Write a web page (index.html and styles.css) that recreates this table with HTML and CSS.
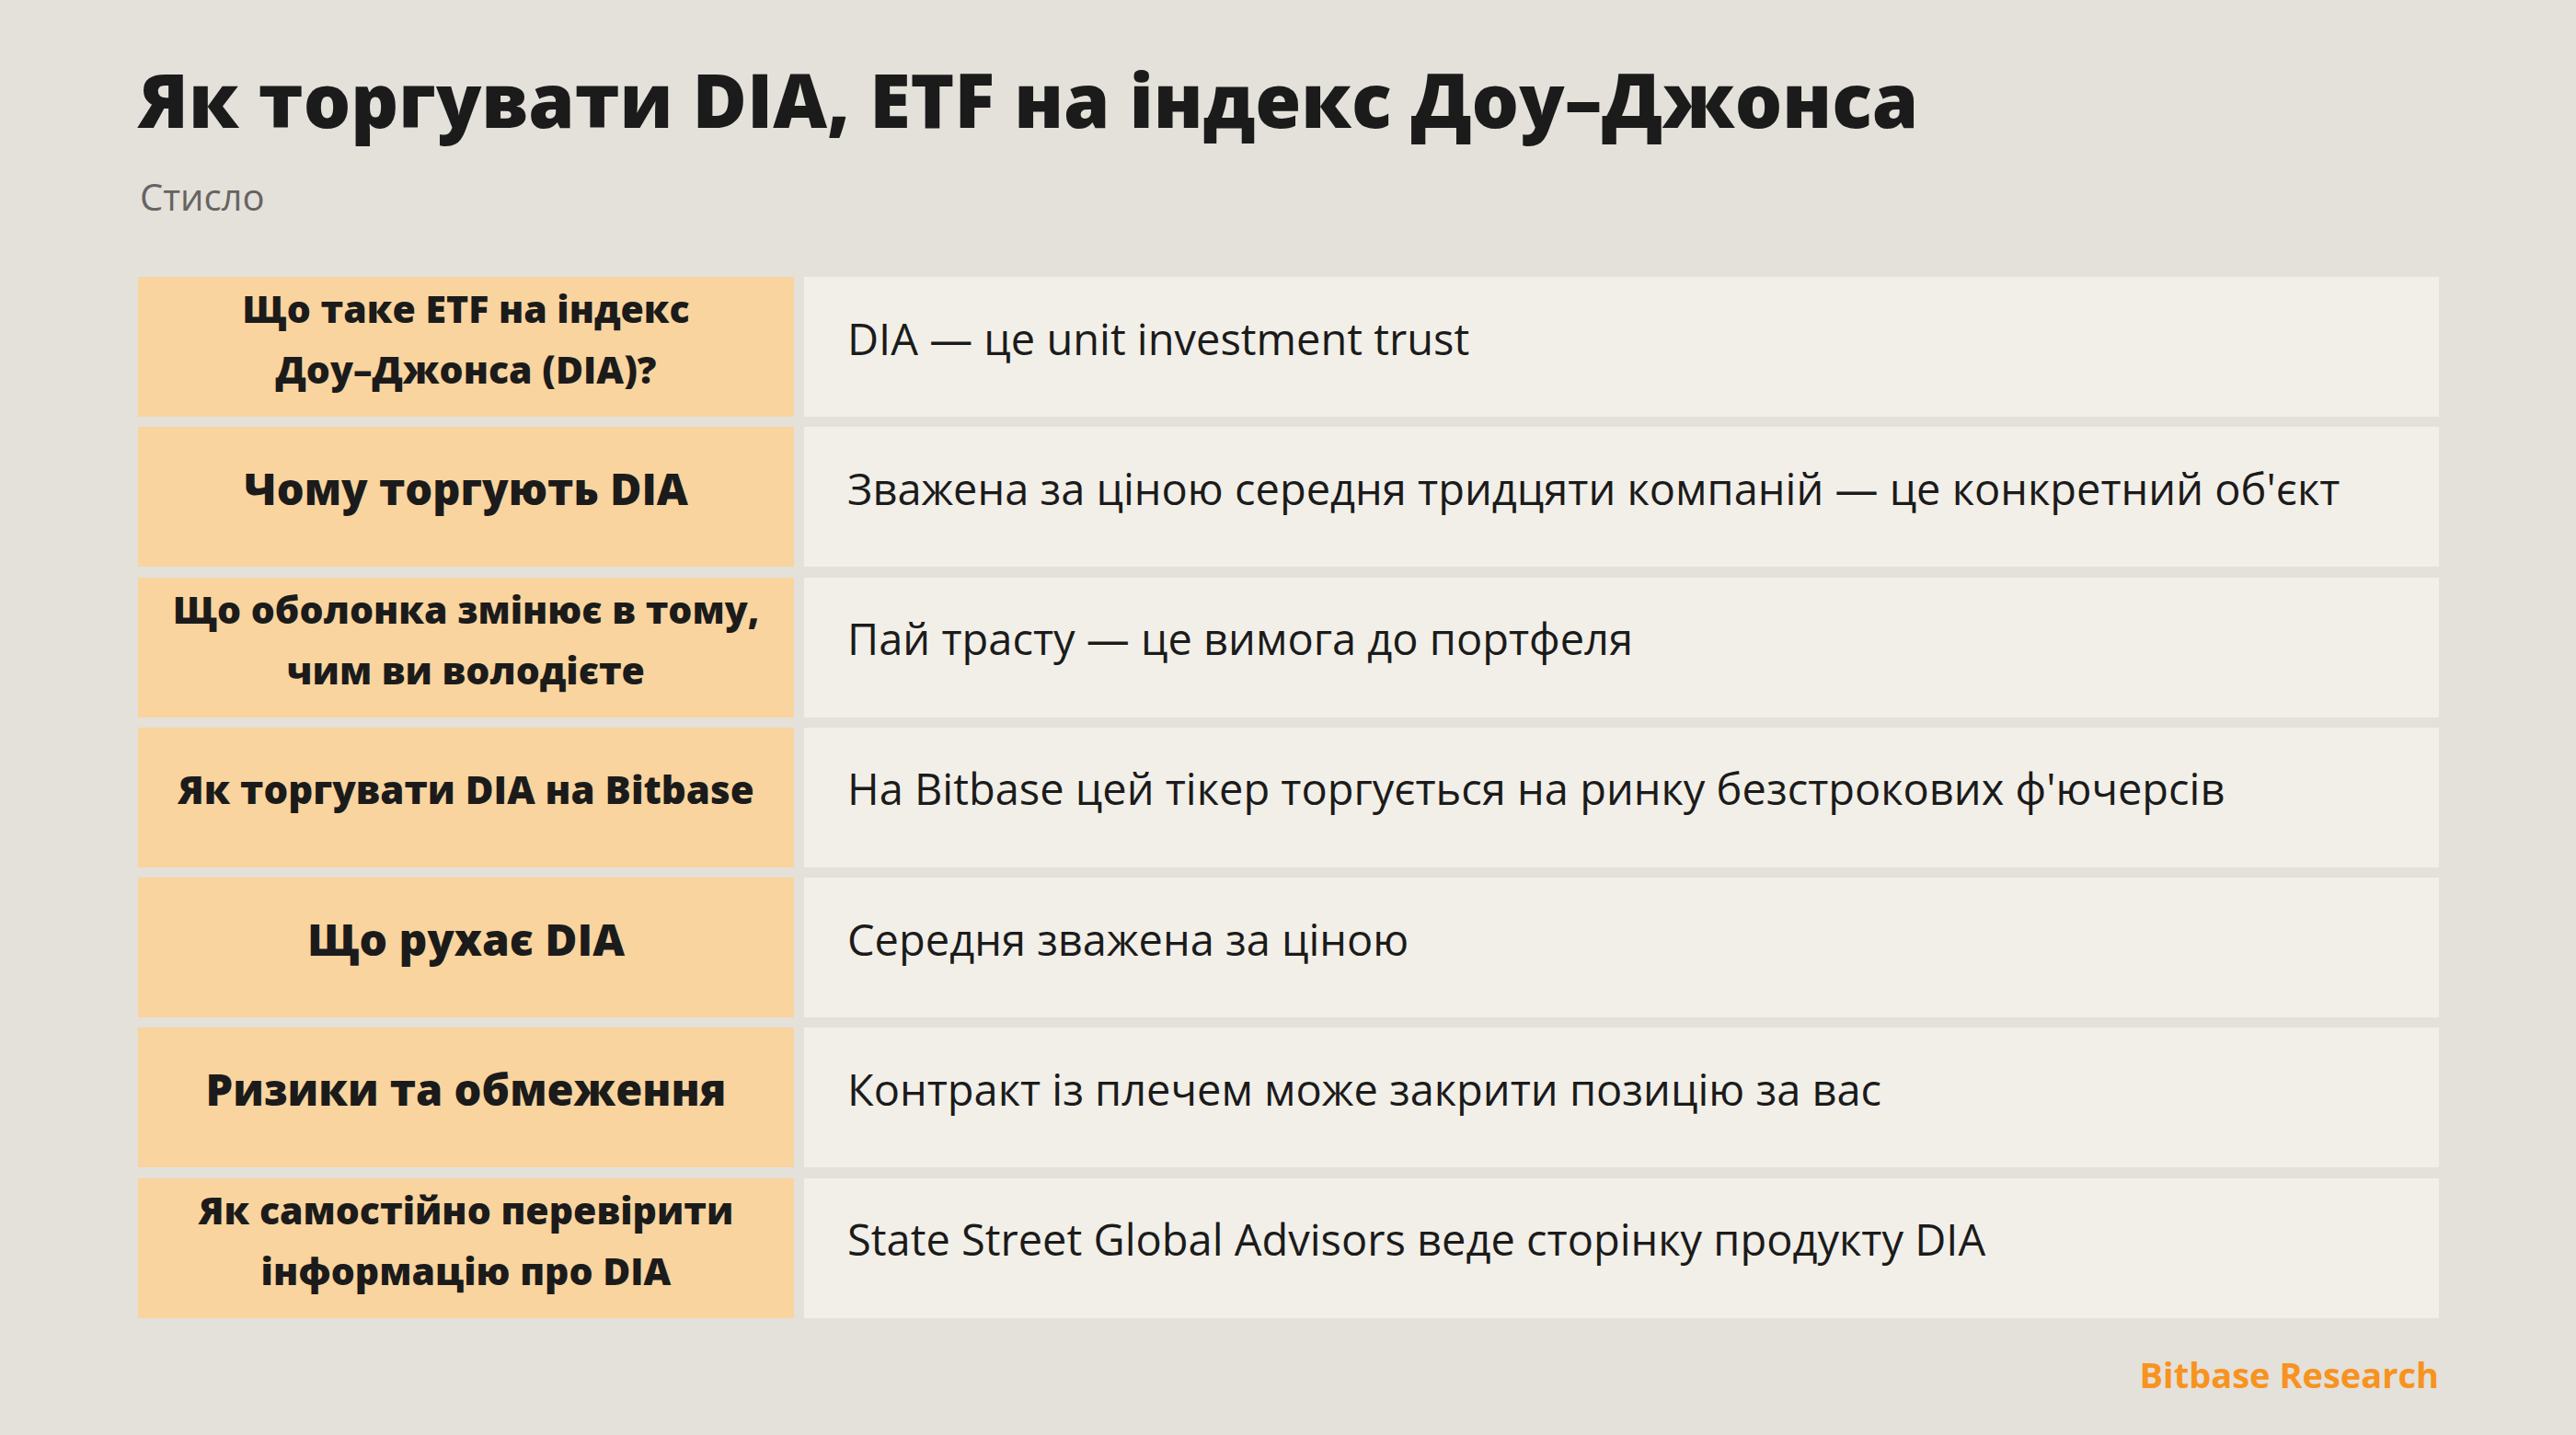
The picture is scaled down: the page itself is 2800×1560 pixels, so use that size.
FILE: index.html
```html
<!DOCTYPE html>
<html lang="uk">
<head>
<meta charset="utf-8">
<title>Як торгувати DIA</title>
<link rel="stylesheet" href="styles.css">
</head>
<body>
<main class="page">
  <h1 class="title">Як торгувати DIA, ETF на індекс Доу–Джонса</h1>
  <p class="subtitle">Стисло</p>
  <section class="table">
    <div class="row">
      <div class="label s41">Що таке ETF на індекс<br>Доу–Джонса (DIA)?</div>
      <div class="value">DIA — це unit investment trust</div>
    </div>
    <div class="row">
      <div class="label s47">Чому торгують DIA</div>
      <div class="value">Зважена за ціною середня тридцяти компаній — це конкретний об'єкт</div>
    </div>
    <div class="row">
      <div class="label s41">Що оболонка змінює в тому,<br>чим ви володієте</div>
      <div class="value">Пай трасту — це вимога до портфеля</div>
    </div>
    <div class="row">
      <div class="label s42">Як торгувати DIA на Bitbase</div>
      <div class="value">На Bitbase цей тікер торгується на ринку безстрокових ф'ючерсів</div>
    </div>
    <div class="row">
      <div class="label s48">Що рухає DIA</div>
      <div class="value">Середня зважена за ціною</div>
    </div>
    <div class="row">
      <div class="label s47">Ризики та обмеження</div>
      <div class="value">Контракт із плечем може закрити позицію за вас</div>
    </div>
    <div class="row">
      <div class="label s41">Як самостійно перевірити<br>інформацію про DIA</div>
      <div class="value">State Street Global Advisors веде сторінку продукту DIA</div>
    </div>
  </section>
  <footer class="brand">Bitbase Research</footer>
</main>
</body>
</html>
```
FILE: styles.css
```css
* { box-sizing: border-box; }
html, body {
  margin: 0;
  padding: 0;
  background: #e4e0da;
}
body {
  font-family: "Open Sans", "Noto Sans", "DejaVu Sans", sans-serif;
  color: #1b1b1b;
  width: 2800px;
  height: 1560px;
  overflow: hidden;
}
.page {
  padding: 58px 150px 0 150px;
  display: flex;
  flex-direction: column;
}
.title {
  margin: 0;
  font-size: 81px;
  line-height: 100px;
  font-weight: 800;
  letter-spacing: 0;
  color: #1b1b1b;
}
.subtitle {
  margin: 31px 0 0 2px;
  font-size: 40px;
  line-height: 50px;
  color: #666462;
}
.table {
  margin-top: 62px;
  display: flex;
  flex-direction: column;
  gap: 11.3px;
  width: 2501px;
}
.row {
  display: grid;
  grid-template-columns: 713px 1777px;
  column-gap: 11px;
  height: 152px;
}
.label {
  background: #f9d49e;
  display: flex;
  align-items: center;
  justify-content: center;
  text-align: center;
  padding: 0 16px 18px 16px;
  font-weight: 800;
  line-height: 66px;
  color: #1b1b1b;
}
.s41 { font-size: 41px; }
.s42 { font-size: 42px; }
.s47 { font-size: 47px; }
.s48 { font-size: 48px; }
.value {
  background: #f2efe8;
  display: flex;
  align-items: center;
  padding: 0 0 19px 47px;
  font-size: 47px;
  color: #1b1b1b;
}
.brand {
  margin-top: 35px;
  width: 2501px;
  text-align: right;
  font-size: 38px;
  font-weight: 700;
  color: #f7931e;
}
```
